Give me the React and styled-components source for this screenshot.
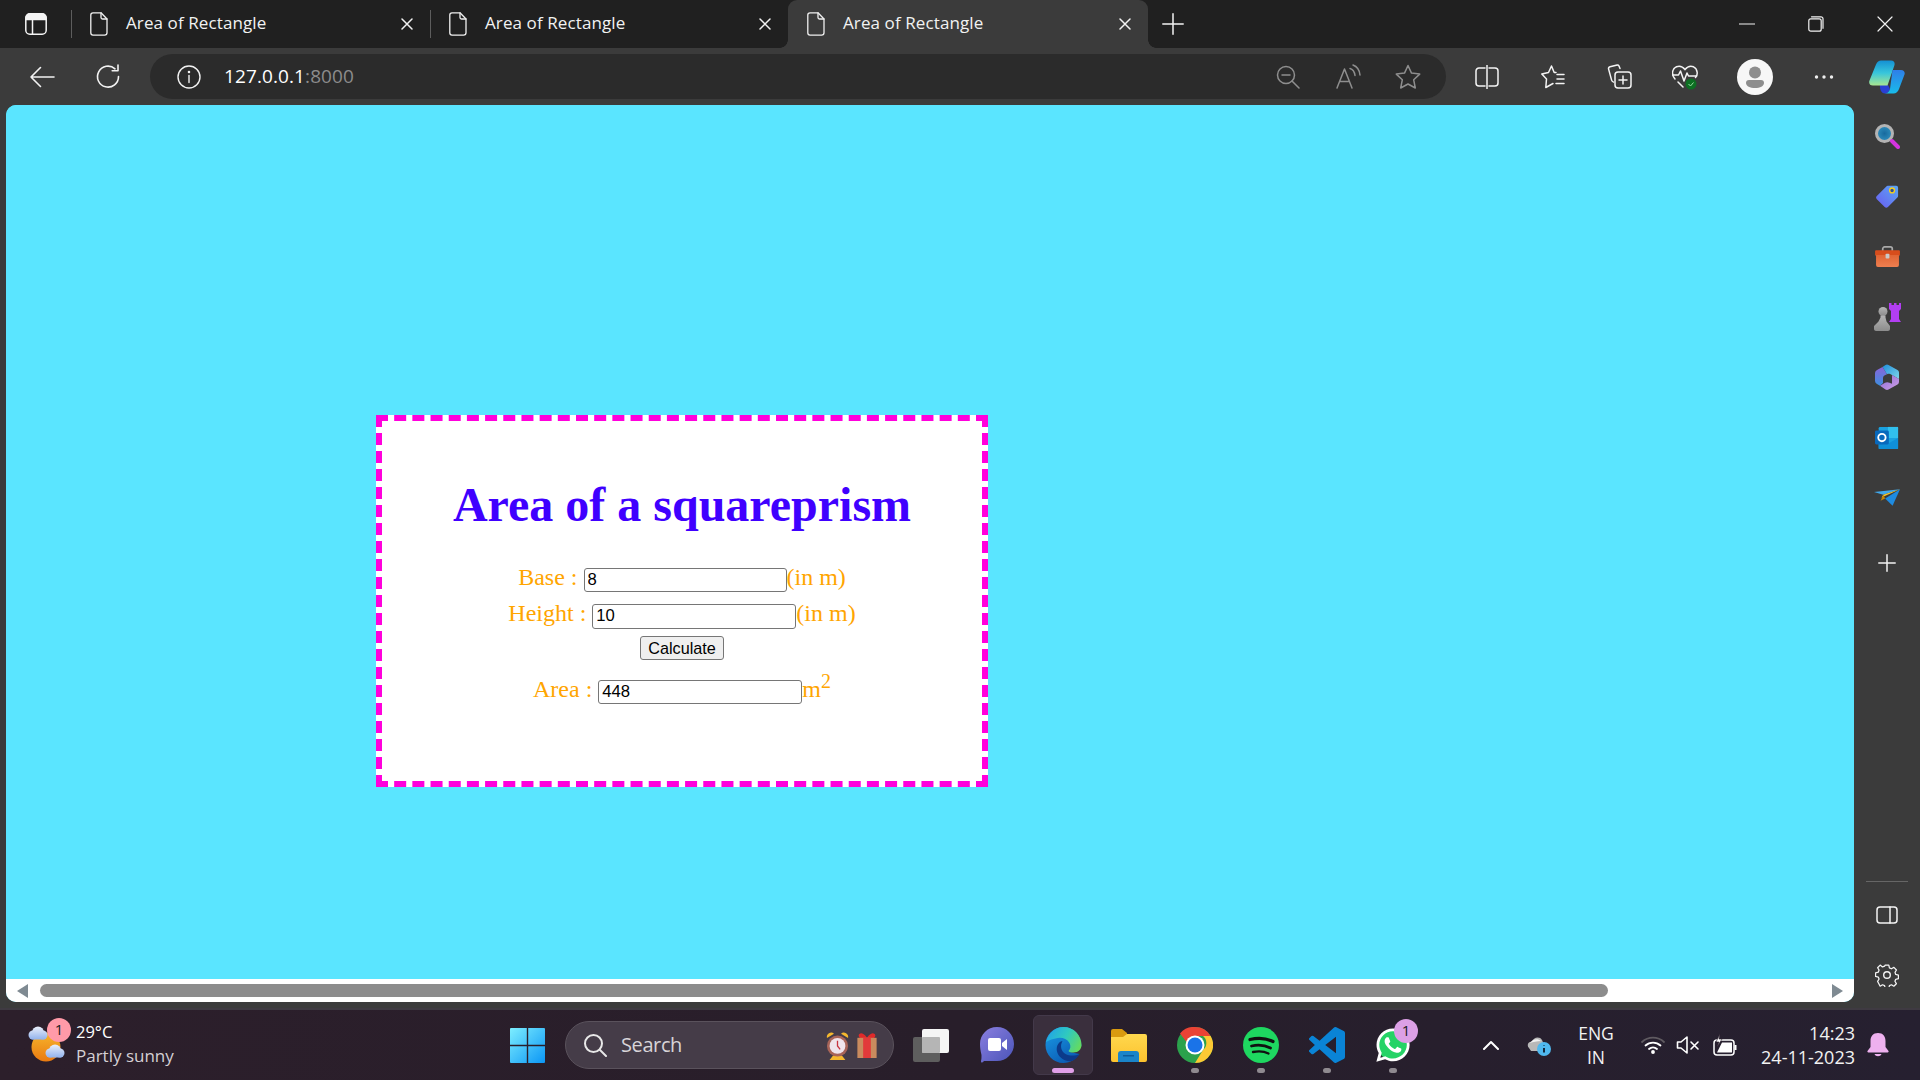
import React from 'react';
import styled, { createGlobalStyle } from 'styled-components';
import { FaWhatsapp } from 'react-icons/fa';

const Global = createGlobalStyle`
  html, body { margin: 0; padding: 0; background: #202020; }
  * { box-sizing: border-box; }
`;
const UI = '"Open Sans", "Noto Sans", "Liberation Sans", sans-serif';

const Screen = styled.div`
  width: 1920px; height: 1080px; overflow: hidden; display: flex; flex-direction: column;
  font-family: ${UI}; color: #fff; background: #3b3b3b;
`;
const TabBar = styled.div`
  height: 48px; flex: none; display: flex; align-items: stretch; background: #202020;
`;
const TabToggle = styled.div`
  width: 71px; display: flex; align-items: center; padding-left: 25px;
`;
const Tab = styled.div`
  position: relative; width: ${p => p.$w}px; display: flex; align-items: center; padding-left: 19px;
  background: ${p => p.$active ? '#3b3b3b' : 'transparent'};
  border-radius: ${p => p.$active ? '9px 9px 0 0' : '0'};
  color: #f2f2f2;
  ${p => p.$sep && `&::before { content: ''; position: absolute; left: 0; top: 10px; bottom: 10px; width: 1px; background: #5d5d5d; }`}
  ${p => p.$active && `
    &::before, &::after { content: ''; position: absolute; bottom: 0; width: 8px; height: 8px; }
    &::before { left: -8px; background: radial-gradient(circle at 0 0, #202020 7.5px, #3b3b3b 8px); }
    &::after { right: -8px; background: radial-gradient(circle at 100% 0, #202020 7.5px, #3b3b3b 8px); }
  `}
`;
const TabTitle = styled.span`
  margin-left: 18px; font-size: 17px; letter-spacing: 0.1px; white-space: nowrap; flex: 1; line-height: 20px; padding-bottom: 2px;
`;
const TabClose = styled.div`
  width: 46px; display: flex; justify-content: center; flex: none;
`;
const NewTab = styled.div`
  width: 50px; display: flex; align-items: center; justify-content: center;
`;
const WinControls = styled.div`
  margin-left: auto; display: flex; align-items: center; padding-right: 1px;
`;
const WinBtn = styled.div`
  width: 69px; display: flex; justify-content: center; align-items: center;
`;
const Toolbar = styled.div`
  height: 57px; flex: none; background: #3b3b3b; display: flex; align-items: center; padding-left: 9px;
`;
const Slot = styled.div`
  width: ${p => p.$w || 66}px; flex: none; height: 45px; display: flex; align-items: center; justify-content: center;
`;
const AddressBar = styled.div`
  width: 1296px; height: 45px; margin: 0 8px 0 9px; flex: none; border-radius: 23px; background: #2b2b2b;
  display: flex; align-items: center; padding: 0 8px 0 22px;
`;
const Url = styled.div`
  margin-left: 18px; font-size: 19px; letter-spacing: 0.1px; color: #fff; flex: 1; padding-bottom: 2px;
  span { color: #8c8c8c; }
`;
const Main = styled.div`
  height: 903px; flex: none; display: flex; padding-left: 6px; background: #3b3b3b;
`;
const Page = styled.div`
  width: 1848px; height: 897px; border-radius: 10px; overflow: hidden; display: flex; flex-direction: column; background: #5ae5ff;
`;
const Canvas = styled.div`
  flex: 1; padding: 310px 0 0 370px; background: #5ae5ff;
`;
const Card = styled.div`
  width: 612px; height: 372px; background: #fff; border: 6px dashed #ff00dc;
  font-family: "Liberation Serif", "Times New Roman", serif; color: #ffa500;
  padding-top: 56px;
`;
const Title = styled.h1`
  margin: 0; text-align: center; color: #3f00ff; font-size: 48px; line-height: 56px; font-weight: 700;
`;
const Form = styled.div`
  margin-top: 30px; display: flex; flex-direction: column; align-items: center;
`;
const Row = styled.div`
  display: flex; align-items: baseline; justify-content: center; font-size: 24px; line-height: 28px;
  height: ${p => p.$h}px; white-space: pre; margin-top: ${p => p.$mt || 0}px;
`;
const Field = styled.input`
  width: ${p => p.$w}px; height: ${p => p.$h || 24}px; margin: 0 ${p => p.$gap ?? 1}px 0 0; padding: 0 3px; border: 1.25px solid #767676; border-radius: 3px;
  font: 16.67px "Liberation Sans", Arial, sans-serif; color: #000; background: #fff;
`;
const CalcButton = styled.button`
  width: 84px; height: 24px; padding: 0; border: 1.25px solid #767676; border-radius: 3px; background: #efefef;
  font: 16.2px "Liberation Sans", Arial, sans-serif; color: #000;
`;
const Sup = styled.sup`
  font-size: 20px; line-height: 0; vertical-align: baseline; position: relative; top: -9px;
`;
const HScroll = styled.div`
  height: 23px; flex: none; background: #fff; display: flex; align-items: center; padding: 0 11px;
`;
const ScrollThumb = styled.div`
  margin-left: 12px; width: 1568px; height: 13px; border-radius: 7px; background: #8c8c8c;
`;
const ScrollArrow = styled.div`
  width: 0; height: 0; border-top: 7px solid transparent; border-bottom: 7px solid transparent;
  ${p => p.$right ? 'margin-left: auto; border-left: 11px solid #7f8a92;' : 'border-right: 11px solid #7f8a92;'}
`;
const Sidebar = styled.div`
  width: 66px; flex: none; display: flex; flex-direction: column; align-items: center; padding-top: 1px;
`;
const SideSlot = styled.div`
  height: ${p => p.$h || 60.3}px; margin-top: ${p => p.$mt || 0}px; width: 100%; flex: none; display: flex; align-items: center; justify-content: center;
`;
const SideGap = styled.div` flex: 1; `;
const SideRule = styled.div` width: 42px; height: 1px; background: #666; margin-bottom: 3px; `;
const SideFoot = styled.div` height: 3px; flex: none; `;
const Taskbar = styled.div`
  height: 72px; flex: none; display: flex; align-items: center; border-top: 2px solid #3f3a42;
  background: linear-gradient(90deg, #2c1f2b 0%, #281e2a 50%, #262030 100%);
`;
const Weather = styled.div`
  width: 510px; flex: none; display: flex; align-items: center; padding-left: 28px;
`;
const WeatherIcon = styled.div` position: relative; width: 38px; height: 40px; `;
const Badge = styled.div`
  position: absolute; width: 24px; height: 24px; border-radius: 50%; background: ${p => p.$bg};
  color: #1c1c1c; font-size: 15px; line-height: 23px; text-align: center; top: ${p => p.$top}px; right: ${p => p.$right}px;
`;
const WeatherText = styled.div`
  margin: -2px 0 0 10px; display: flex; flex-direction: column; font-size: 17px; line-height: 24px;
  span:first-child { font-size: 16.5px; }
  span:last-child { color: #d4d0d4; }
`;
const SearchPill = styled.div`
  width: 329px; height: 48px; margin: 0 4px 0 20px; border-radius: 24px; flex: none; background: #453c48; border: 1px solid #5a525c;
  display: flex; align-items: center; padding: 0 15px 0 17px;
`;
const SearchText = styled.span`
  margin-left: 14px; font-size: 20px; color: #d8d4d8; flex: 1; letter-spacing: -0.4px; padding-bottom: 2px;
`;
const IconGap = styled.span` width: ${p => p.$w}px; flex: none; `;
const AppSlot = styled.div`
  position: relative; width: 66px; height: 60px; flex: none; display: flex; align-items: center; justify-content: center;
  ${p => p.$active && `&::before { content:''; position:absolute; inset: 0 3px; border-radius: 6px; background:#3a2f3d; border: 1px solid #43394a; }`}
  svg { position: relative; }
`;
const RunDot = styled.div`
  position: absolute; bottom: 2px; left: 50%; transform: translateX(-50%); height: 5px; border-radius: 3px;
  width: ${p => p.$active ? 22 : 8}px; background: ${p => p.$active ? '#e09fe8' : '#8f8a90'};
`;
const Tray = styled.div` flex: 1; display: flex; align-items: center; padding-left: 40px; `;
const TrayItem = styled.div`
  width: ${p => p.$w}px; flex: none; display: flex; align-items: center; justify-content: center;
`;
const LangClock = styled.div`
  width: ${p => p.$w}px; flex: none; text-align: ${p => p.$right ? 'right' : 'center'}; font-size: ${p => p.$right ? 18 : 17.5}px; line-height: 24px; color: #f2f2f2; white-space: nowrap;
`;
const WhatsApp = styled.div`
  position: relative; width: 36px; height: 36px; border-radius: 50%; display: flex; align-items: center; justify-content: center;
  background: radial-gradient(circle, #25d366 60%, transparent 62%); color: #fff; font-size: 38px; line-height: 0;
`;

const Svg = ({ s = 24, h, sw = 1.5, c = 'currentColor', children }) => (
  <svg width={s} height={h || s} viewBox={`0 0 ${s} ${h || s}`} fill="none" stroke={c} strokeWidth={sw} strokeLinecap="round" strokeLinejoin="round" style={{ display: 'block' }}>{children}</svg>
);
const Art = ({ w, h, vb, children }) => (
  <svg width={w} height={h} viewBox={vb || `0 0 ${w} ${h}`} fill="none" style={{ display: 'block' }}>{children}</svg>
);
const DocIcon = () => <Svg s={18} h={24} sw={1.3} c="#f0f0f0"><path d="M3 .8h8l6 6.2v13.800a2.400 2.400 0 0 1-2.400 2.400H3A2.400 2.400 0 0 1 .8 20.800V3A2.200 2.200 0 0 1 3 .8z" /><path d="M11 .8V5.500A1.500 1.500 0 0 0 12.500 7H17" /></Svg>;
const CloseX = ({ s = 12, c = '#f2f2f2', sw = 1.5 }) => <Svg s={s} sw={sw} c={c}><path d={`M1 1L${s - 1} ${s - 1}M${s - 1} 1L1 ${s - 1}`} /></Svg>;
const TabToggleIcon = () => <Svg s={22} sw={1.5} c="#f4f4f4"><rect x=".8" y=".8" width="20.400" height="20.400" rx="4" /><path d="M1 6.500V5a4 4 0 0 1 4-4h12a4 4 0 0 1 4 4v1.500z" fill="#f4f4f4" /><path d="M7.500 7v14" /></Svg>;

const Back = () => <Svg s={26} h={24} sw={1.6} c="#f2f2f2"><path d="M25 12H2M11.500 2.500L2 12l9.500 9.500" /></Svg>;
const Refresh = () => <Svg s={26} sw={1.6} c="#f2f2f2"><path d="M23.500 12.500A10.500 10.500 0 1 1 20 4.800" /><path d="M23 1v5.800h-5.800" /></Svg>;
const Info = () => <Svg s={24} sw={1.4} c="#f2f2f2"><circle cx="12" cy="12" r="11" /><path d="M12 10.500v7" /><circle cx="12" cy="7" r=".6" fill="#f2f2f2" /></Svg>;
const GRAY = '#8e8e8e';
const ZoomOut = () => <Svg s={24} sw={1.5} c={GRAY}><circle cx="10" cy="10" r="8.500" /><path d="M6 10h8M16 16l7 7" /></Svg>;
const ReadAloud = () => <Svg s={26} sw={1.5} c={GRAY}><path d="M2 24L9.500 5l7.500 19M4.800 17.500h9.500" /><path d="M15 4.500c3 .8 4.500 3.200 5 7M18 1c4 1.500 6.500 4.500 7 10" /></Svg>;
const StarOut = () => <Svg s={26} sw={1.5} c={GRAY}><path d="M13 1.500l3.500 7.600 8.200 1-6 5.700 1.600 8.200-7.300-4-7.300 4 1.600-8.200-6-5.700 8.200-1z" /></Svg>;
const W = '#f4f4f4';
const Split = () => <Svg s={24} sw={1.5} c={W}><path d="M10 3H4a3 3 0 0 0-3 3v12a3 3 0 0 0 3 3h6M14 3h6a3 3 0 0 1 3 3v12a3 3 0 0 1-3 3h-6M12 0v24" /></Svg>;
const Favs = () => <Svg s={24} sw={1.5} c={W}><path d="M15 7.500h-1.800L10.500 1 7.500 7.500.8 9l4.700 5-.7 8.500 7.200-4" /><path d="M16 9.500h7M16 14h7M15 18.500h8" /></Svg>;
const Collections = () => <Svg s={25} sw={1.5} c={W}><rect x="8" y="8" width="16" height="16" rx="3" /><path d="M16 12v8M12 16h8" /><path d="M13 4.500l-1-2.500a1.800 1.800 0 0 0-1.800-1L3 2.700a2 2 0 0 0-1.400 2.400l3 11a3 3 0 0 0 2 2" /></Svg>;
const Health = () => <Art w={26} h={26}><path d="M3 15C-.5 11-.5 5 4.500 2.800 8 1.500 11 3 13 5.500 15 3 18 1.500 21.500 2.800 26 5 26 11 23.500 13.500M11 23l-5-5" stroke={W} strokeWidth="1.500" strokeLinecap="round" /><path d="M.5 11h6l2-4 3.500 10 3-8 1.500 3h8" stroke={W} strokeWidth="1.500" strokeLinejoin="round" strokeLinecap="round" /><circle cx="19" cy="20" r="5.500" fill="#0d6f22" /><path d="M16.500 20l2 2 3-3.500" stroke="#9ae0a5" strokeWidth="1" /></Art>;
const Profile = () => <Art w={36} h={36}><circle cx="18" cy="18" r="18" fill="#f7f7f7" /><circle cx="18" cy="13.500" r="6" fill="#8d8d8d" /><path d="M9 24a3 3 0 0 1 3-3h12a3 3 0 0 1 3 3c0 3-4 5-9 5s-9-2-9-5z" fill="#8d8d8d" /></Art>;
const Dots = () => <Art w={20} h={4}><circle cx="2.500" cy="2" r="1.700" fill="#eee" /><circle cx="10" cy="2" r="1.700" fill="#eee" /><circle cx="17.500" cy="2" r="1.700" fill="#eee" /></Art>;
const Copilot = () => <Art w={36} h={34}>
  <defs>
    <linearGradient id="cpA" x1="0" y1="0" x2="0" y2="1"><stop offset="0" stopColor="#1490d4" /><stop offset=".5" stopColor="#38c6dc" /><stop offset="1" stopColor="#a8e690" /></linearGradient>
    <linearGradient id="cpB" x1="0" y1="0" x2="0" y2="1"><stop offset="0" stopColor="#2f7ee8" /><stop offset="1" stopColor="#18bcea" /></linearGradient>
  </defs>
  <path d="M11 25H19l2 4c-1 2.500-2.500 4.500-5 4.500-3 0-5.500-3.500-5-8.500z" fill="#2a3fd4" />
  <path d="M12 .5h10c3 0 4 2 3.500 4.500L18.500 25.500H4C1 25.500-.3 23.500.3 21L7 4.500C8 2 10 .5 12 .5z" fill="url(#cpA)" />
  <path d="M23.500 10H32c3 0 4.200 2 3.500 4.500L30 29c-.8 2.500-3 4.500-5.500 4.500H15.500c2.500 0 4.500-1.500 5.500-4.500z" fill="url(#cpB)" />
</Art>;

const Magnify = () => <Art w={25} h={25}><defs><radialGradient id="mgL"><stop offset="0" stopColor="#176a9e" /><stop offset="1" stopColor="#2f8fbe" /></radialGradient></defs><circle cx="9.500" cy="9.500" r="8" fill="url(#mgL)" stroke="#b3b3b3" strokeWidth="3" /><path d="M17 17l6 6" stroke="#d434e0" strokeWidth="4" strokeLinecap="round" /></Art>;
const TagIcon = () => <Art w={24} h={24} vb="0 0 26 26"><defs><linearGradient id="tg" x1="1" y1="0" x2="0" y2="1"><stop offset="0" stopColor="#5aa7f5" /><stop offset="1" stopColor="#6a5cf0" /></linearGradient></defs><path d="M12 3a3 3 0 0 1 2-1h9a2 2 0 0 1 2 2v9a3 3 0 0 1-1 2L14 25a2.500 2.500 0 0 1-3.500 0L2 16.500A2.500 2.500 0 0 1 2 13z" fill="url(#tg)" /><circle cx="18.500" cy="7" r="2.600" fill="#2c4fa0" stroke="#f5cf1d" strokeWidth="1.500" /></Art>;
const Toolbox = () => <Art w={27} h={21} vb="0 0 28 22"><defs><linearGradient id="tb" x1="0" y1="0" x2="0" y2="1"><stop offset="0" stopColor="#e06534" /><stop offset="1" stopColor="#ee7f50" /></linearGradient></defs><path d="M9 6V3a2 2 0 0 1 2-2h6a2 2 0 0 1 2 2v3" stroke="#a9a9a9" strokeWidth="1.800" /><path d="M1 5.500a1 1 0 0 1 1-1h24a1 1 0 0 1 1 1V10H1z" fill="#d74d1c" /><path d="M2 9.500h24V20a2 2 0 0 1-2 2H4a2 2 0 0 1-2-2z" fill="url(#tb)" /><rect x="12" y="8" width="4" height="5" rx="1" fill="#c9c9c9" /></Art>;
const Chess = () => <Art w={27} h={28}><defs><linearGradient id="pwn" x1="0" y1="0" x2="0" y2="1"><stop offset="0" stopColor="#b5b5b5" /><stop offset="1" stopColor="#8c8c8c" /></linearGradient></defs><path d="M15 0h2.500v2h2.500V0h2.500v2H25V0h2v6l-2 2v8l2 3H15l2-3V8l-2-2z" fill="#b23ef2" /><circle cx="9" cy="8.500" r="4.500" fill="url(#pwn)" /><path d="M6.500 12.500h5v2l1 4 3.500 4.500v3c0 1-1 2-2 2H2c-1 0-2-1-2-2v-3l4.500-4.500 2-4z" fill="url(#pwn)" /></Art>;
const M365 = () => <Art w={24} h={26}><defs><linearGradient id="m1" x1="0" y1="0" x2="1" y2="1"><stop offset="0" stopColor="#1f8fdc" /><stop offset="1" stopColor="#7fd6ea" /></linearGradient><linearGradient id="m3" x1="0" y1="0" x2="0" y2="1"><stop offset="0" stopColor="#8a64d8" /><stop offset="1" stopColor="#3c8fe0" /></linearGradient><linearGradient id="m2" x1="0" y1="0" x2="1" y2="1"><stop offset="0" stopColor="#8c6ad8" /><stop offset="1" stopColor="#cfa0e4" /></linearGradient></defs>
  <path d="M7.500 3L10.500 1a3 3 0 0 1 3 0L22.500 6A3 3 0 0 1 24 8.500V15L17 11c-2-1-3-1.500-5-.8z" fill="url(#m1)" />
  <path d="M7.500 3L2 6A3.500 3.500 0 0 0 0 9v8a3.500 3.500 0 0 0 2 3l3 1.800L8 19V14c0-2 1.500-3 4-3.800z" fill="url(#m3)" />
  <path d="M24 15v3a3 3 0 0 1-1.500 2.500L13.500 25.500a3 3 0 0 1-3 0L5 21.800l5-3c1.500-.8 3-.8 4.500 0l2.500 1V11z" fill="url(#m2)" />
</Art>;
const Outlook = () => <Art w={24} h={24} vb="0 0 26 26"><rect x="4" y="1" width="21" height="24" rx="1.500" fill="#1aa1e0" /><rect x="14" y="1" width="11" height="12" fill="#31c0ee" /><path d="M4 13l10.500 6L25 13v12H4z" fill="#0f8fd8" /><rect x="0" y="5" width="15" height="15" rx="1.500" fill="#0869bd" /><circle cx="7.500" cy="12.500" r="4" stroke="#fff" strokeWidth="2" /></Art>;
const Plane = () => <Art w={26} h={19} vb="0 0 28 20"><path d="M0 4l28-3-18 6z" fill="#40a9ee" /><path d="M28 1L10 7l-3 5 1-2z" fill="#f7c52a" /><path d="M28 1l-8 18-8-8z" fill="#1e8be0" /><path d="M10 7l-3 7 1-1 4-2z" fill="#c88400" /></Art>;
const Plus = ({ s = 20 }) => <Svg s={s} sw={1.5} c="#f2f2f2"><path d={`M${s / 2} .8v${s - 1.6}M.8 ${s / 2}h${s - 1.6}`} /></Svg>;
const PanelIcon = () => <Svg s={22} h={18} sw={1.5} c={W}><rect x="1" y="1" width="20" height="16" rx="3" /><path d="M14 1v16" /></Svg>;
const Gear = () => <Svg s={24} sw={1.4} c={W}><path d="M10 1.500h4l.7 3 2.300 1 2.700-1.600 2.800 3-1.600 2.600.8 2.300 3 .7v4l-3 .7-.9 2.200 1.600 2.700-2.800 2.800-2.600-1.600-2.300 1-.7 3h-4l-.7-3-2.300-1-2.600 1.600L1.600 19.600l1.600-2.700-.9-2.200-3-.7v-4l3-.7.9-2.300L1.600 4.400l2.800-3L7 3.500l2.300-1z" transform="translate(1.200 .8) scale(.9)" /><circle cx="12" cy="12" r="3.300" /></Svg>;

const Cloud = ({ x, y, id }) => <g transform={`translate(${x} ${y})`}><circle cx="6" cy="9" r="4.500" fill={`url(#${id})`} /><circle cx="11" cy="6.500" r="6" fill={`url(#${id})`} /><circle cx="16" cy="9" r="4.500" fill={`url(#${id})`} /><rect x="3" y="8" width="16" height="5.500" rx="2.700" fill={`url(#${id})`} /></g>;
const WeatherArt = () => <Art w={38} h={40}><defs><linearGradient id="sun" x1="0" y1="0" x2="0" y2="1"><stop offset="0" stopColor="#f7b52c" /><stop offset="1" stopColor="#ea7a10" /></linearGradient><linearGradient id="cld" gradientUnits="userSpaceOnUse" x1="0" y1="0" x2="0" y2="14"><stop offset="0" stopColor="#eef2fb" /><stop offset="1" stopColor="#8fb0ec" /></linearGradient></defs><circle cx="18" cy="22" r="14.500" fill="url(#sun)" /><Cloud x={-1} y={1} id="cld" /><Cloud x={16} y={19} id="cld" /></Art>;
const WinLogo = () => <Art w={35} h={35}><defs><linearGradient id="win" x1="0" y1="0" x2="1" y2="1"><stop offset="0" stopColor="#7deeff" /><stop offset="1" stopColor="#0b96f5" /></linearGradient></defs><path d="M0 1a1 1 0 0 1 1-1h15.800v16.800H0zM18.200 0H34a1 1 0 0 1 1 1v15.800H18.200zM0 18.200h16.800V35H1a1 1 0 0 1-1-1zM18.200 18.200H35V34a1 1 0 0 1-1 1H18.200z" fill="url(#win)" /></Art>;
const SearchGlyph = () => <Svg s={24} sw={2} c="#e8e8e8"><circle cx="10.500" cy="10.500" r="8.500" /><path d="M17 17l6 6" /></Svg>;
const Alarm = () => <Art w={23} h={29} vb="0 0 26 33"><path d="M1 8a5 5 0 0 1 8-5zM25 8a5 5 0 0 0-8-5z" fill="#f5b82e" /><path d="M8 28l-4 5h18l-4-5z" fill="#f5b82e" /><circle cx="13" cy="17" r="12" fill="#a86458" /><circle cx="13" cy="17" r="9" fill="#efe4ec" /><path d="M13 11v6l3 4" stroke="#c7343f" strokeWidth="1.500" /></Art>;
const Gift = () => <Art w={22} h={25} vb="0 0 22 26"><path d="M3 1c3-2 6 1 8 4 2-3 5-6 8-4 2 2-1 5-2 5H5C4 6 1 3 3 1z" fill="#e02a2a" /><rect x="1" y="5" width="20" height="21" fill="#c98b5e" /><rect x="7" y="5" width="8" height="21" fill="#e23a3a" /></Art>;
const TaskView = () => <Art w={36} h={33}><rect x="0" y="8" width="27" height="25" rx="2" fill="#5e5e5e" /><rect x="9" y="0" width="27" height="24" rx="2" fill="#f5f5f5" /><rect x="9" y="8" width="18" height="16" rx="1" fill="#b5b5b5" /></Art>;
const Meet = () => <Art w={34} h={36}><defs><linearGradient id="mt" x1="0" y1="0" x2="1" y2="1"><stop offset="0" stopColor="#8a7fe0" /><stop offset="1" stopColor="#4a54b8" /></linearGradient></defs><path d="M17 0c9.500 0 17 7.500 17 17s-7.500 17-17 17H4c-2 2-3 2-3 0 .5-2 .5-3 .5-6C.5 24 0 20 0 17 0 7.500 7.500 0 17 0z" fill="url(#mt)" /><rect x="8" y="11" width="13" height="13" rx="2" fill="#fff" /><path d="M22 16l5-4v11l-5-4z" fill="#fff" /></Art>;
const Edge = () => <Art w={37} h={36} vb="0 0 36 36"><defs><linearGradient id="eg1" x1="0" y1=".3" x2="1" y2=".7"><stop offset="0" stopColor="#22a4e6" /><stop offset=".5" stopColor="#2fc9c0" /><stop offset="1" stopColor="#66db5e" /></linearGradient><linearGradient id="eg2" x1="0" y1="0" x2=".6" y2="1"><stop offset="0" stopColor="#1b9ee8" /><stop offset="1" stopColor="#0b5cb4" /></linearGradient></defs>
  <path d="M36 19C36 8 28 0 18 0 8 0 0 8 0 18c0 10 8 18 18 18 7 0 12-4 16-9L24 25z" fill="url(#eg2)" />
  <path d="M17 14c-5 1-7 7-5 12 2 5 8 9 14 8 4-1 6-4 8-7-4 2-10 2-14 0-4-2-6-8-3-13z" fill="#0c3a8a" />
  <path d="M.5 15C3 6 10 0 18 0c10 0 18 8 18 18 0 4-3 7.500-8 7.500-2.500 0-4.500-.5-5-1.500 2-2 2.500-5 1-8-3-5-9-6-14-4.500C5 12.500 2 14 .5 15z" fill="url(#eg1)" />
</Art>;
const Folder = () => <Art w={36} h={33}><defs><linearGradient id="fd" x1="0" y1="0" x2="0" y2="1"><stop offset="0" stopColor="#ffd84e" /><stop offset="1" stopColor="#fcc22e" /></linearGradient></defs><path d="M0 2a2 2 0 0 1 2-2h9l5 4v5H0z" fill="#d99a0f" /><path d="M0 8h12l4-3h18a2 2 0 0 1 2 2v24a2 2 0 0 1-2 2H2a2 2 0 0 1-2-2z" fill="url(#fd)" /><path d="M7 33v-8a3 3 0 0 1 3-3h15a3 3 0 0 1 3 3v8z" fill="#1a84c9" /><rect x="12" y="26" width="11" height="1.500" fill="#0c5c9c" /></Art>;
const Chrome = () => <Art w={36} h={36}><circle cx="18" cy="18" r="18" fill="#2ba24c" /><path d="M18 0a18 18 0 0 1 15.600 9H18a9 9 0 0 0-8.500 6L3 6.500A18 18 0 0 1 18 0z" fill="#ea4335" /><path d="M33.600 9A18 18 0 0 1 18 36l8-13a9 9 0 0 0 0-14z" fill="#fcc934" /><circle cx="18" cy="18" r="9.500" fill="#fff" /><circle cx="18" cy="18" r="7.500" fill="#1a73e8" /></Art>;
const Spotify = () => <Art w={36} h={36}><circle cx="18" cy="18" r="18" fill="#1ed760" /><path d="M7 12.500c8-2 16-1.500 23 2" stroke="#111" strokeWidth="3.200" strokeLinecap="round" /><path d="M8.500 19c7-1.500 13-1 19 2" stroke="#111" strokeWidth="2.800" strokeLinecap="round" /><path d="M10 25c5-1 11-.8 15.500 1.500" stroke="#111" strokeWidth="2.300" strokeLinecap="round" /></Art>;
const VSCode = () => <Art w={36} h={36} vb="0 0 24 24"><path fill="#0a84d6" d="M23.150 2.587L18.210.21a1.494 1.494 0 0 0-1.705.29l-9.460 8.630-4.120-3.128a.999.999 0 0 0-1.276.057L.327 7.261A1 1 0 0 0 .326 8.740L3.899 12 .326 15.260a1 1 0 0 0 .001 1.479L1.650 17.940a.999.999 0 0 0 1.276.057l4.120-3.128 9.460 8.630a1.492 1.492 0 0 0 1.704.29l4.942-2.377A1.500 1.500 0 0 0 24 20.060V3.939a1.500 1.500 0 0 0-.85-1.352zm-5.146 14.861L10.826 12l7.178-5.448v10.896z" /></Art>;
const Chevron = () => <Svg s={18} h={10} sw={2} c="#fff"><path d="M2 9l7-7 7 7" /></Svg>;
const CloudInfo = () => <Art w={24} h={22}><path d="M2 14c-3-3 0-7 3-6 1-5 8-6 10-2l3 7-6 4H4z" fill="#b8b8b8" /><path d="M3 9c2-4 8-5 11-2-4 0-8 1-11 2z" fill="#f0f0f0" /><circle cx="17" cy="15" r="7" fill="#4fb8ee" /><path d="M17 14v4.500M17 11.500v.5" stroke="#14293c" strokeWidth="2" /></Art>;
const Wifi = () => <Svg s={24} h={18} sw={1.8} c="#fff"><path d="M1 6a16 16 0 0 1 22 0" stroke="#5f5a60" /><path d="M4.500 9.500a11 11 0 0 1 15 0M8 13a6 6 0 0 1 8 0" /><circle cx="12" cy="16" r="1" fill="#fff" /></Svg>;
const Mute = () => <Svg s={24} h={18} sw={1.6} c="#fff"><path d="M1.500 6v6H5l6 5V1L5 6z" /><path d="M15 6l7 7M22 6l-7 7" /></Svg>;
const Battery = () => <Art w={24} h={22}><rect x="1" y="6" width="20" height="15" rx="3" stroke="#fff" strokeWidth="1.500" /><path d="M22.500 11v5" stroke="#fff" strokeWidth="2" /><path d="M4 18.500l5-10h10v10z" fill="#fff" /><path d="M7 0L3 8h3l-2 5 5-8H6z" fill="#fff" stroke="#2a1f2b" strokeWidth=".6" /></Art>;
const Bell = () => <Art w={22} h={24}><path d="M11 0c5 0 7.500 3.500 7.500 8v6l3 4a1 1 0 0 1-1 1.500H1.500a1 1 0 0 1-1-1.500l3-4V8C3.500 3.500 6 0 11 0z" fill="#eeb1ef" /><path d="M7.500 21h7c-1 3-6 3-7 0z" fill="#eeb1ef" /></Art>;

export default function App() {
  return (
    <Screen>
      <Global />
      <TabBar>
        <TabToggle><TabToggleIcon /></TabToggle>
        <Tab $w={359} $sep><DocIcon /><TabTitle>Area of Rectangle</TabTitle><TabClose><CloseX /></TabClose></Tab>
        <Tab $w={358} $sep><DocIcon /><TabTitle>Area of Rectangle</TabTitle><TabClose><CloseX /></TabClose></Tab>
        <Tab $w={360} $active><DocIcon /><TabTitle>Area of Rectangle</TabTitle><TabClose><CloseX /></TabClose></Tab>
        <NewTab><Plus s={22} /></NewTab>
        <WinControls>
          <WinBtn><Svg s={16} h={2} sw={1.2} c="#f2f2f2"><path d="M.5 1h15" /></Svg></WinBtn>
          <WinBtn><Svg s={16} sw={1.2} c="#f2f2f2"><rect x=".8" y="2.800" width="12.400" height="12.400" rx="2" /><path d="M3.500 .8h9.500a2 2 0 0 1 2 2v9.500" /></Svg></WinBtn>
          <WinBtn><CloseX s={16} sw={1.2} /></WinBtn>
        </WinControls>
      </TabBar>
      <Toolbar>
        <Slot><Back /></Slot>
        <Slot><Refresh /></Slot>
        <AddressBar>
          <Slot $w={34}><Info /></Slot>
          <Url>127.0.0.1<span>:8000</span></Url>
          <Slot $w={60}><ZoomOut /></Slot>
          <Slot $w={60}><ReadAloud /></Slot>
          <Slot $w={60}><StarOut /></Slot>
        </AddressBar>
        <Slot><Split /></Slot>
        <Slot><Favs /></Slot>
        <Slot><Collections /></Slot>
        <Slot><Health /></Slot>
        <Slot $w={74}><Profile /></Slot>
        <Slot $w={64}><Dots /></Slot>
        <Slot $w={62}><Copilot /></Slot>
      </Toolbar>
      <Main>
        <Page>
          <Canvas>
            <Card>
              <Title>Area of a squareprism</Title>
              <Form>
                <Row $h={36}>{'Base : '}<Field $w={203} $gap={0} defaultValue="8" />(in m)</Row>
                <Row $h={37}>{'Height : '}<Field $w={204} $h={25} $gap={0} defaultValue="10" />(in m)</Row>
                <CalcButton>Calculate</CalcButton>
                <Row $h={30} $mt={15}>{'Area : '}<Field $w={204} $gap={0} defaultValue="448" />m<Sup>2</Sup></Row>
              </Form>
            </Card>
          </Canvas>
          <HScroll><ScrollArrow /><ScrollThumb /><ScrollArrow $right /></HScroll>
        </Page>
        <Sidebar>
          <SideSlot><Magnify /></SideSlot>
          <SideSlot><TagIcon /></SideSlot>
          <SideSlot><Toolbox /></SideSlot>
          <SideSlot><Chess /></SideSlot>
          <SideSlot><M365 /></SideSlot>
          <SideSlot><Outlook /></SideSlot>
          <SideSlot><Plane /></SideSlot>
          <SideSlot $mt={5}><Plus s={18} /></SideSlot>
          <SideGap />
          <SideRule />
          <SideSlot $h={60}><PanelIcon /></SideSlot>
          <SideSlot $h={60}><Gear /></SideSlot>
          <SideFoot />
        </Sidebar>
      </Main>
      <Taskbar>
        <Weather>
          <WeatherIcon><WeatherArt /><Badge $bg="#ff9aa8" $top={-7} $right={-5}>1</Badge></WeatherIcon>
          <WeatherText><span>29°C</span><span>Partly sunny</span></WeatherText>
        </Weather>
        <WinLogo />
        <SearchPill>
          <SearchGlyph />
          <SearchText>Search</SearchText>
          <Alarm /><IconGap $w={7} /><Gift />
        </SearchPill>
        <AppSlot><TaskView /></AppSlot>
        <AppSlot><Meet /></AppSlot>
        <AppSlot $active><Edge /><RunDot $active /></AppSlot>
        <AppSlot><Folder /></AppSlot>
        <AppSlot><Chrome /><RunDot /></AppSlot>
        <AppSlot><Spotify /><RunDot /></AppSlot>
        <AppSlot><VSCode /><RunDot /></AppSlot>
        <AppSlot>
          <WhatsApp><FaWhatsapp /></WhatsApp>
          <Badge $bg="#dca0e6" $top={4} $right={8}>1</Badge>
          <RunDot />
        </AppSlot>
        <Tray>
          <TrayItem $w={50}><Chevron /></TrayItem>
          <TrayItem $w={46}><CloudInfo /></TrayItem>
          <LangClock $w={68}>ENG<br />IN</LangClock>
          <TrayItem $w={46}><Wifi /></TrayItem>
          <TrayItem $w={24}><Mute /></TrayItem>
          <TrayItem $w={50}><Battery /></TrayItem>
          <LangClock $w={105} $right>14:23<br />24-11-2023</LangClock>
          <TrayItem $w={46}><Bell /></TrayItem>
        </Tray>
      </Taskbar>
    </Screen>
  );
}
